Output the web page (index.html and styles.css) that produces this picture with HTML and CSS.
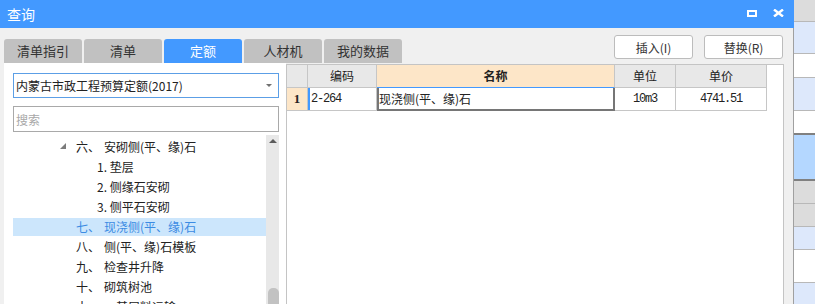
FILE: index.html
```html
<!DOCTYPE html>
<html lang="zh">
<head>
    <meta charset="UTF-8">
    <title>查询</title>
    <link rel="stylesheet" href="styles.css">
</head>
<body>
    <div class="screen">
        <div class="dialog">
            <div class="titlebar">
                <span class="title">查询</span>
                <div class="win-btns">
                    <svg width="10" height="7" viewBox="0 0 10 7"><rect x="1" y="1" width="8" height="5" fill="none" stroke="#fff" stroke-width="2"/></svg>
                    <svg width="11" height="8" viewBox="0 0 11 8"><path d="M1 0.5 L10 7.5 M10 0.5 L1 7.5" stroke="#fff" stroke-width="2.4" fill="none"/></svg>
                </div>
            </div>
            <div class="dialog-body">
                <div class="topbar">
                    <div class="tabs">
                        <div class="tab">清单指引</div>
                        <div class="tab">清单</div>
                        <div class="tab active">定额</div>
                        <div class="tab">人材机</div>
                        <div class="tab">我的数据</div>
                    </div>
                    <div class="actions">
                        <button class="btn">插入(I)</button>
                        <button class="btn">替换(R)</button>
                    </div>
                </div>
                <div class="main">
                    <div class="side">
                        <div class="select">内蒙古市政工程预算定额(2017)<span class="caret"></span></div>
                        <input class="search" placeholder="搜索">
                        <div class="tree-wrap">
                            <ul class="tree">
                                <li class="lv1"><span class="toggle open"></span><span class="num">六、</span>安砌侧(平、缘)石</li>
                                <li class="lv2">1. 垫层</li>
                                <li class="lv2">2. 侧缘石安砌</li>
                                <li class="lv2">3. 侧平石安砌</li>
                                <li class="lv1 selected"><span class="toggle"></span><span class="num">七、</span>现浇侧(平、缘)石</li>
                                <li class="lv1"><span class="toggle"></span><span class="num">八、</span>侧(平、缘)石模板</li>
                                <li class="lv1"><span class="toggle"></span><span class="num">九、</span>检查井升降</li>
                                <li class="lv1"><span class="toggle"></span><span class="num">十、</span>砌筑树池</li>
                                <li class="lv1"><span class="toggle"></span><span class="num">十一、</span>基层料运输</li>
                            </ul>
                            <div class="vscroll">
                                <span class="up"></span>
                                <span class="thumb"></span>
                            </div>
                        </div>
                    </div>
                    <div class="grid-wrap">
                        <div class="grid">
                            <div class="cell head"></div>
                            <div class="cell head">编码</div>
                            <div class="cell head name-head">名称</div>
                            <div class="cell head">单位</div>
                            <div class="cell head">单价</div>

                            <div class="cell rownum">1</div>
                            <div class="cell code mono">2-264</div>
                            <div class="cell name current">现浇侧(平、缘)石</div>
                            <div class="cell mono center">10m3</div>
                            <div class="cell mono center">4741.51</div>
                        </div>
                    </div>
                </div>
            </div>
        </div>
        <div class="strip">
            <div class="srow gray h22"></div>
            <div class="srow blue h32"></div>
            <div class="srow h24"></div>
            <div class="srow blue h33"></div>
            <div class="srow h24 dark"></div>
            <div class="srow sel h46 dark"></div>
            <div class="srow gray h23"></div>
            <div class="srow gray h23"></div>
            <div class="srow blue h23"></div>
            <div class="srow h33"></div>
            <div class="srow blue last"></div>
        </div>
    </div>
</body>
</html>
```
FILE: styles.css
```css
body {
    margin: 0;
    background: #fff;
    color: #222;
    font-family: "Noto Sans CJK SC", "Microsoft YaHei", sans-serif;
    font-size: 12px;
}
.screen {
    display: flex;
    width: 815px;
    height: 304px;
    overflow: hidden;
}
.dialog {
    flex: none;
    width: 794px;
    display: flex;
    flex-direction: column;
}
.titlebar {
    height: 28px;
    flex: none;
    background: #4399ff;
    color: #fff;
    display: flex;
    align-items: center;
    padding-left: 7px;
    font-size: 14px;
}
.title {
    flex: 1;
}
.win-btns {
    display: flex;
    align-items: center;
    gap: 16px;
    margin-right: 10px;
    margin-top: -2px;
}
.win-btns svg {
    display: block;
}
.dialog-body {
    flex: 1;
    min-height: 0;
    background: #f0f0f0;
    border-right: 1px solid #a0a0a0;
    display: flex;
    flex-direction: column;
}
.topbar {
    height: 35px;
    flex: none;
    display: flex;
    justify-content: space-between;
    padding: 0 10px 0 4px;
}
.tabs {
    display: flex;
    gap: 2px;
    align-self: flex-end;
}
.tab {
    width: 78px;
    height: 24px;
    line-height: 24px;
    text-align: center;
    background: #c1c1c1;
    color: #333;
    font-size: 13px;
    border-radius: 3px 3px 0 0;
}
.tab.active {
    background: #4399ff;
    color: #fff;
}
.actions {
    display: flex;
    gap: 11px;
    padding-top: 7px;
}
.btn {
    width: 79px;
    height: 24px;
    padding: 0;
    background: #fff;
    border: 1px solid #bcbcbc;
    border-radius: 3px;
    color: #333;
    font-family: inherit;
    font-size: 12px;
}
.main {
    flex: 1;
    min-height: 0;
    display: flex;
    padding-left: 4px;
}
.side {
    width: 282px;
    flex: none;
    box-sizing: border-box;
    background: #fff;
    padding: 10px 7px 0 9px;
    display: flex;
    flex-direction: column;
}
.select {
    height: 25px;
    box-sizing: border-box;
    border: 1px solid #5c9fe6;
    padding-left: 2px;
    line-height: 23px;
    display: flex;
    color: #222;
}
.caret {
    margin-left: auto;
    margin-right: 6px;
    margin-top: 10px;
    width: 0;
    height: 0;
    border-left: 3px solid transparent;
    border-right: 3px solid transparent;
    border-top: 3px solid #707070;
}
.search {
    margin-top: 8px;
    height: 26px;
    box-sizing: border-box;
    border: 1px solid #a9a9a9;
    padding: 0 0 0 2px;
    font-family: inherit;
    font-size: 12px;
    outline: none;
}
.search::placeholder {
    color: #a8a8a8;
}
.tree-wrap {
    flex: 1;
    min-height: 0;
    display: flex;
    margin-top: 3px;
    overflow: hidden;
}
.tree {
    flex: 1;
    list-style: none;
    margin: 0;
    padding: 3px 0 0;
}
.tree li {
    height: 18px;
    line-height: 18px;
    margin-bottom: 2px;
    display: flex;
    align-items: center;
    white-space: nowrap;
    color: #222;
}
.tree .lv1 {
    padding-left: 47px;
}
.tree .lv2 {
    padding-left: 84px;
}
.toggle {
    width: 6px;
    height: 6px;
    margin-right: 10px;
    box-sizing: border-box;
}
.toggle.open {
    width: 0;
    height: 0;
    border-left: 6px solid transparent;
    border-bottom: 6px solid #7c7c7c;
    margin-top: -2px;
}
.num {
    margin-right: 4px;
}
.tree li.selected {
    background: #cce6fc;
    color: #3b8be3;
}
.vscroll {
    width: 14px;
    flex: none;
    margin-right: -1px;
    background: #e8e8e8;
    display: flex;
    flex-direction: column;
    align-items: center;
}
.up {
    margin-top: 4px;
    width: 0;
    height: 0;
    border-left: 4px solid transparent;
    border-right: 4px solid transparent;
    border-bottom: 4px solid #5c5c5c;
}
.thumb {
    margin-top: auto;
    width: 11px;
    height: 16px;
    background: #c2c2c2;
    border-radius: 5px 5px 0 0;
}
.grid-wrap {
    width: 498px;
    flex: none;
    box-sizing: border-box;
    margin-top: 1px;
    background: #fff;
    border: 1px solid #c4c4c4;
    border-bottom: none;
}
.grid {
    display: grid;
    grid-template-columns: 21px 69px 238px 61px 91px;
    grid-auto-rows: 23px;
    width: 480px;
}
.cell {
    box-sizing: border-box;
    border-right: 1px solid #c6c6c6;
    border-bottom: 1px solid #c6c6c6;
    line-height: 22px;
    white-space: nowrap;
    overflow: hidden;
}
.head {
    background: #e8e8e8;
    text-align: center;
    color: #222;
}
.name-head {
    background: #fde6c8;
    font-weight: bold;
    border-bottom-color: #4399ff;
}
.rownum {
    background: #fde6c8;
    text-align: center;
    font-family: "Liberation Serif", serif;
    font-weight: bold;
    font-size: 13px;
}
.mono {
    font-family: "Liberation Mono", monospace;
    font-size: 12px;
    letter-spacing: -1.2px;
}
.code {
    padding-left: 3px;
    box-shadow: inset 2px 0 #4399ff;
}
.center {
    text-align: center;
}
.name.current {
    border: 2px solid #767676;
    border-top: none;
    line-height: 21px;
    padding-left: 0;
}
.strip {
    flex: 1;
    display: flex;
    flex-direction: column;
}
.srow {
    flex: none;
    box-sizing: border-box;
    background: #fff;
    border-bottom: 1px solid #b8b8b8;
}
.srow.gray {
    background: #dcdcdc;
}
.srow.blue {
    background: #dde8fb;
}
.srow.sel {
    background: #b4d7ff;
}
.srow.dark {
    border-bottom: 2px solid #808080;
}
.srow.last {
    flex: 1;
    border-bottom: none;
}
.h22 { height: 22px; }
.h23 { height: 23px; }
.h24 { height: 24px; }
.h32 { height: 32px; }
.h33 { height: 33px; }
.h46 { height: 46px; }
```
